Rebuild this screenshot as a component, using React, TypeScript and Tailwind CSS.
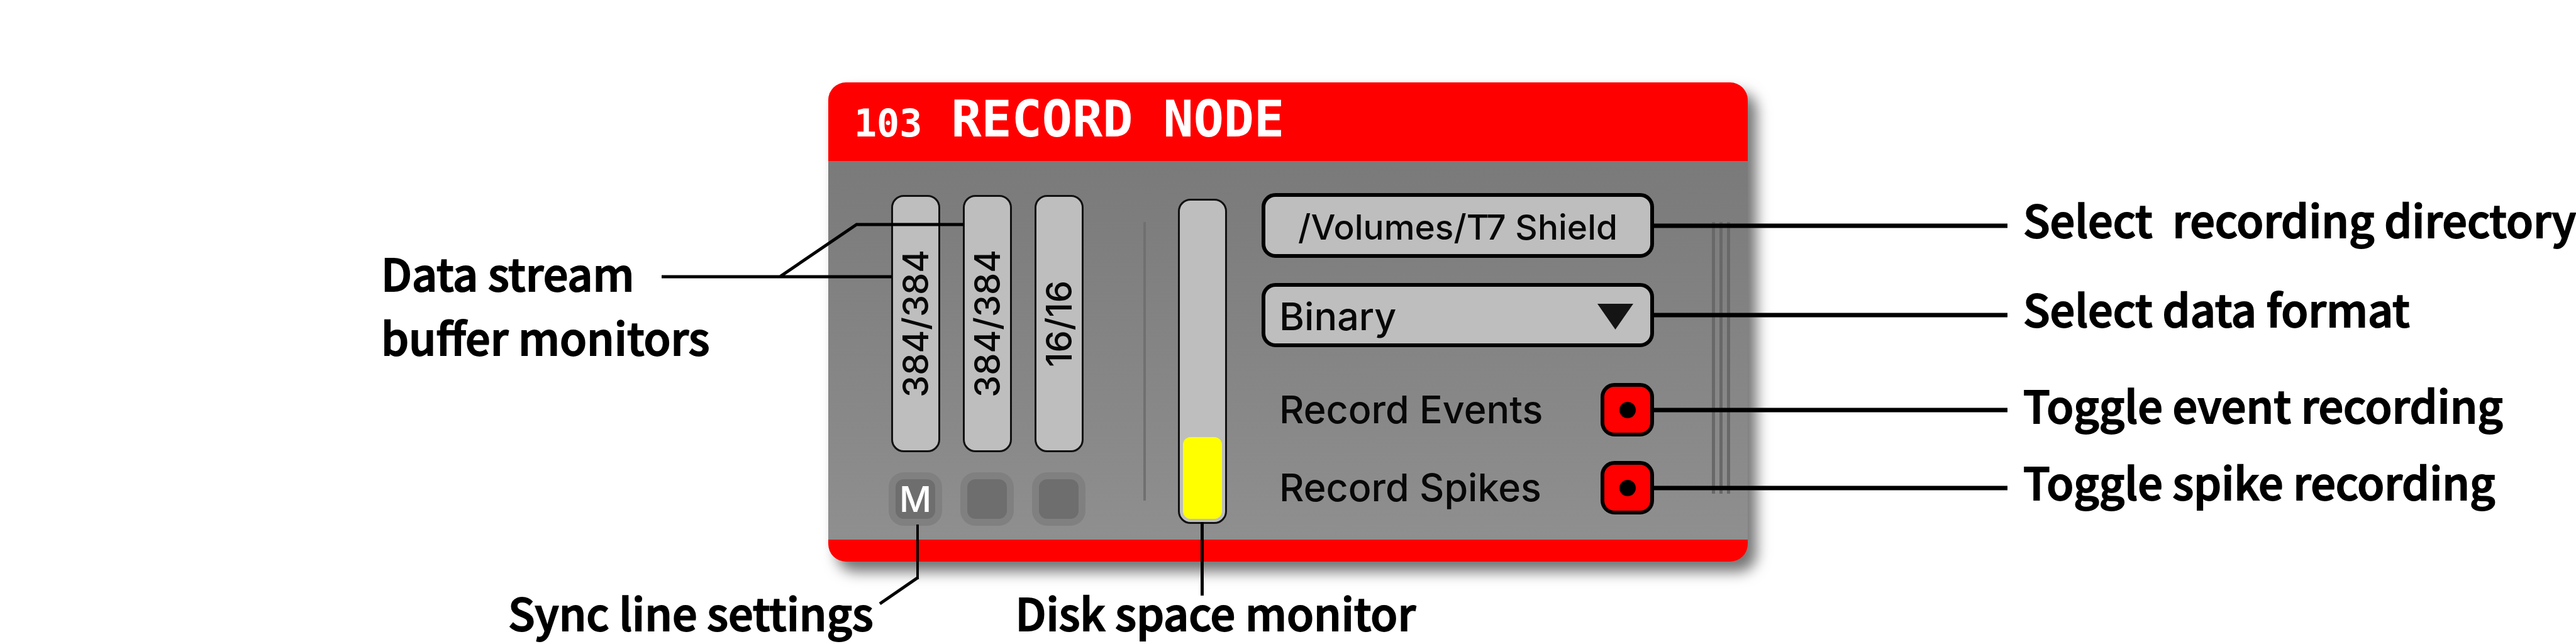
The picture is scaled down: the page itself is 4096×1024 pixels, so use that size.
import React from "react";

const streams = [
  { id: "A", samples: "384/384", sync: "M" },
  { id: "B", samples: "384/384", sync: "" },
  { id: "C", samples: "16/16", sync: "" },
];

function Leader() {
  return <span aria-hidden="true" className="absolute left-full top-1/2 h-[7px] w-[562px] -translate-y-1/2 bg-black" />;
}

function StreamMonitors() {
  return (
    <section aria-label="Data streams" className="pt-[54px]">
      <div className="relative flex gap-[36px] px-1">
        {streams.map((s) => (
          <div
            key={s.id}
            className="flex h-[409px] w-[78px] items-center justify-center rounded-[20px] border-3 border-[#111] bg-[#bebebe]"
          >
            <span className="rotate-180 text-[56px] leading-[72px] text-[#080808] [writing-mode:vertical-rl]">{s.samples}</span>
          </div>
        ))}
        <svg
          aria-hidden="true"
          className="pointer-events-none absolute -left-[361px] top-[40px] h-[100px] w-[480px]"
          viewBox="0 0 480 100"
          fill="none"
          stroke="#000"
          strokeWidth="5"
        >
          <path d="M0 90H366M188 90L310 7H480" />
        </svg>
      </div>
      <div className="relative mt-[32px] flex gap-[29px]">
        {streams.map((s) => (
          <button
            key={s.id}
            type="button"
            aria-label={"Sync line for stream " + s.id}
            className="flex size-[85px] items-center justify-center rounded-[24px] border-[11px] border-[#808080] bg-[#6e6e6e] text-[56px] font-medium leading-[62px] text-white"
          >
            {s.sync}
          </button>
        ))}
        <svg
          aria-hidden="true"
          className="pointer-events-none absolute -left-[18px] top-[83px] h-[130px] w-[70px]"
          viewBox="0 0 70 130"
          fill="none"
          stroke="#000"
        >
          <path d="M64 0V87" strokeWidth="4" />
          <path d="M65 84L4 126" strokeWidth="5" />
        </svg>
      </div>
    </section>
  );
}

function DiskMonitor() {
  return (
    <div
      role="meter"
      aria-label="Disk space"
      aria-valuenow={26}
      aria-valuemin={0}
      aria-valuemax={100}
      className="relative ml-[51px] mt-[60px] flex h-[517px] w-[78px] flex-col justify-end rounded-[20px] border-3 border-[#111] bg-[#bebebe] p-[5px]"
    >
      <div className="rounded-[12px] bg-[#ffff00]" style={{ height: "26%" }} />
      <span aria-hidden="true" className="absolute left-[33px] top-full h-[117px] w-[5px] bg-black" />
    </div>
  );
}

function RecordToggle({ id, label }: { id: string; label: string }) {
  return (
    <div className="relative flex h-[85px] items-center justify-between pl-[28px]">
      <label htmlFor={id} className="text-[61px] leading-[85px] text-[#080808]">
        {label}
      </label>
      <input
        id={id}
        type="checkbox"
        defaultChecked
        className="grid size-[85px] appearance-none place-content-center rounded-[22px] border-[6px] border-black bg-[#ff0000] before:size-[26px] before:rounded-full checked:before:bg-black"
      />
      <Leader />
    </div>
  );
}

function Controls() {
  return (
    <section aria-label="Recording settings" className="ml-[55px] w-[624px] pt-[51px]">
      <div className="relative">
        <button
          type="button"
          className="block h-[103px] w-full rounded-[22px] border-[6px] border-black bg-[#bebebe] pt-1 text-[55px] font-medium leading-[86px] text-[#080808]"
        >
          /Volumes/T7 Shield
        </button>
        <Leader />
      </div>
      <div className="relative mt-[40px]">
        <select
          aria-label="Data format"
          className="block h-[102px] w-full appearance-none rounded-[22px] border-[6px] border-black bg-[#bebebe] pl-[22px] pt-1 text-[61px] leading-[86px] text-[#080808]"
        >
          <option>Binary</option>
        </select>
        <svg aria-hidden="true" className="pointer-events-none absolute right-[33px] top-[33px] h-[41px] w-[57px]" viewBox="0 0 57 41">
          <path d="M0 0H57L28.500 41Z" fill="#141414" />
        </svg>
        <Leader />
      </div>
      <div className="mt-[57px] flex flex-col gap-[39px]">
        <RecordToggle id="events" label="Record Events" />
        <RecordToggle id="spikes" label="Record Spikes" />
      </div>
    </section>
  );
}

function RecordNode() {
  return (
    <article className="flex flex-col rounded-[28px] bg-[#ff0000] font-['Inter',sans-serif] shadow-[14px_16px_22px_rgba(0,0,0,0.55)]">
      <header className="flex h-[125px] items-baseline gap-[46px] pl-[41px] font-['DejaVu_Sans_Mono',monospace] font-bold leading-[118px] text-white">
        <span className="text-[60px]">103</span>
        <h1 className="text-[80px]">RECORD NODE</h1>
      </header>
      <div className="flex h-[602px] bg-linear-to-b from-[#7a7a7a] to-[#8f8f8f] pl-[96px]">
        <StreamMonitors />
        <div className="ml-[91px] mt-[97px] h-[443px] w-[4px] bg-[#707070]" />
        <DiskMonitor />
        <Controls />
        <div aria-hidden="true" className="ml-[92px] mt-[97px] flex h-[432px] gap-[7px]">
          <span className="w-[5px] bg-[#686868]" />
          <span className="w-[5px] bg-[#686868]" />
          <span className="w-[5px] bg-[#686868]" />
        </div>
      </div>
      <div className="h-[35px]" />
    </article>
  );
}

const caption = "[-webkit-text-stroke:2px_black]";

export default function App() {
  return (
    <main className="min-h-screen overflow-hidden bg-white font-['Noto_Sans_CJK_SC',sans-serif] text-[70px] font-medium leading-[102px] text-black">
      <div className="grid grid-cols-[1fr_1462px_1fr] pt-[131px]">
        <p className={caption + " pl-[606px] pt-[251px]"}>
          Data stream
          <br />
          buffer monitors
        </p>
        <RecordNode />
        <div className={caption + " flex min-w-0 flex-col whitespace-pre pl-[438px] pt-[166px]"}>
          <p>Select  recording directory</p>
          <p className="mt-[40px]">Select data format</p>
          <p className="mt-[51px]">Toggle event recording</p>
          <p className="mt-[20px]">Toggle spike recording</p>
        </div>
      </div>
      <div className={caption + " flex gap-[226px] whitespace-nowrap pl-[808px] pt-[29px]"}>
        <p>Sync line settings</p>
        <p>Disk space monitor</p>
      </div>
    </main>
  );
}
